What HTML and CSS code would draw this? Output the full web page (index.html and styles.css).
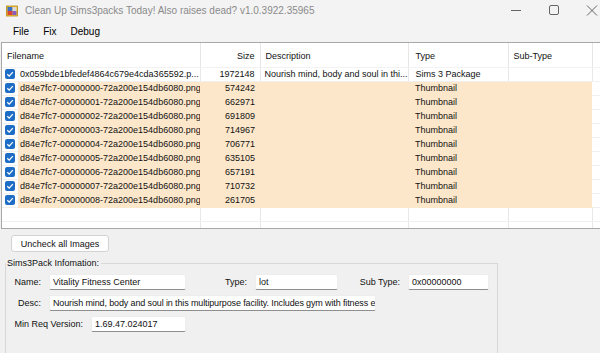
FILE: index.html
```html
<!DOCTYPE html>
<html lang="en">

<head>
    <meta charset="UTF-8">
    <title>Clean Up Sims3packs Today!</title>
    <link rel="stylesheet" href="styles.css">
</head>

<body>
    <div class="titlebar">
        <svg class="app-icon" viewBox="0 0 12 12">
            <rect x="0.5" y="1" width="11" height="10" fill="#f2c230" stroke="#b78a10" stroke-width="0.8" />
            <rect x="1.5" y="2" width="5" height="4" fill="#3a6fc9" />
            <rect x="6.5" y="2" width="4" height="4" fill="#d9d9d9" />
            <rect x="1.5" y="6" width="5" height="4" fill="#d8443a" />
            <rect x="6.5" y="6" width="4" height="4" fill="#8a5cc2" />
        </svg>
        <span class="title">Clean Up Sims3packs Today! Also raises dead? v1.0.3922.35965</span>
        <div class="controls">
            <svg viewBox="0 0 38 21"><path d="M14 10.5h10" stroke="#666" stroke-width="1" /></svg>
            <svg viewBox="0 0 38 21"><rect x="14.5" y="5.5" width="9" height="9" rx="1.5" fill="none" stroke="#666" stroke-width="1" /></svg>
            <svg viewBox="0 0 38 21"><path d="M14 5.5l10 10M24 5.5l-10 10" stroke="#666" stroke-width="1" /></svg>
        </div>
    </div>

    <div class="menubar">
        <span>File</span>
        <span>Fix</span>
        <span>Debug</span>
    </div>

    <div class="list">
        <table>
            <colgroup>
                <col class="c-check">
                <col class="c-name">
                <col class="c-size">
                <col class="c-desc">
                <col class="c-type">
                <col class="c-sub">
                <col class="c-fill">
            </colgroup>
            <thead>
                <tr>
                    <th colspan="2" class="h-name">Filename</th>
                    <th class="num">Size</th>
                    <th class="h-desc">Description</th>
                    <th class="h-type">Type</th>
                    <th class="h-sub">Sub-Type</th>
                    <th class="fill"></th>
                </tr>
            </thead>
            <tbody id="rows">
                <tr class="plain">
                    <td class="check"><svg viewBox="0 0 10 10"><rect width="10" height="10" rx="2" fill="#1d6cc6" /><path d="M2.3 5.2l1.9 1.9 3.6-4" fill="none" stroke="#fff" stroke-width="1.3" /></svg></td>
                    <td class="name">0x059bde1bfedef4864c679e4cda365592.p...</td>
                    <td class="num">1972148</td>
                    <td class="desc">Nourish mind, body and soul in thi...</td>
                    <td class="type">Sims 3 Package</td>
                    <td class="sub"></td>
                    <td class="fill"></td>
                </tr>
            </tbody>
            <tbody>
                <tr class="empty">
                    <td class="check"></td><td></td><td></td><td></td><td></td><td></td><td class="fill"></td>
                </tr>
                <tr class="empty last">
                    <td class="check"></td><td></td><td></td><td></td><td></td><td></td><td class="fill"></td>
                </tr>
            </tbody>
        </table>
    </div>

    <div class="actions">
        <button>Uncheck all Images</button>
    </div>

    <fieldset class="info">
        <legend>Sims3Pack Infomation:</legend>
        <div class="field-row">
            <label class="l-name">Name:</label>
            <div class="box w-name">Vitality Fitness Center</div>
            <label class="l-type">Type:</label>
            <div class="box w-type">lot</div>
            <label class="l-sub">Sub Type:</label>
            <div class="box w-sub">0x00000000</div>
        </div>
        <div class="field-row">
            <label class="l-name">Desc:</label>
            <div class="box w-desc">Nourish mind, body and soul in this multipurpose facility. Includes gym with fitness e</div>
        </div>
        <div class="field-row">
            <label class="l-ver">Min Req Version:</label>
            <div class="box w-ver">1.69.47.024017</div>
        </div>
    </fieldset>

    <script>
        // thumbnail rows
        var sizes = [574242, 662971, 691809, 714967, 706771, 635105, 657191, 710732, 261705];
        var tbody = document.querySelector('#rows');
        var tick = tbody.querySelector('.check').innerHTML;
        for (var i = 0; i < sizes.length; i++) {
            var tr = document.createElement('tr');
            tr.className = 'thumb';
            tr.innerHTML = '<td class="check">' + tick + '</td>' +
                '<td class="name">d84e7fc7-0000000' + i + '-72a200e154db6080.png</td>' +
                '<td class="num">' + sizes[i] + '</td>' +
                '<td class="desc"></td>' +
                '<td class="type">Thumbnail</td>' +
                '<td class="sub"></td>' +
                '<td class="fill"></td>';
            tbody.appendChild(tr);
        }
    </script>
</body>

</html>
```

FILE: styles.css
```css
* {
    margin: 0;
    padding: 0;
    box-sizing: border-box;
}

body {
    width: 600px;
    height: 353px;
    overflow: hidden;
    background: #f0f0f0;
    font-family: "Liberation Sans", Arial, sans-serif;
    font-size: 9px;
    color: #111;
}

/* title bar */
.titlebar {
    height: 21px;
    display: flex;
    align-items: center;
    background: #f3f3f3;
}

.app-icon {
    width: 12px;
    height: 12px;
    margin: 0 7px 0 6px;
}

.title {
    flex: 1;
    font-size: 10px;
    color: #8a8a8a;
    white-space: nowrap;
}

.controls {
    display: flex;
    margin-right: -11px;
}

.controls svg {
    width: 38px;
    height: 21px;
}

/* menu */
.menubar {
    height: 21px;
    display: flex;
    align-items: center;
    gap: 14px;
    padding-left: 13px;
    font-size: 10px;
    color: #000;
    background: #f3f3f3;
}

/* list view */
.list {
    height: 187px;
    margin-left: 1px;
    border: 1px solid #a8a8a8;
    border-right: 0;
    background: #fff;
    overflow: hidden;
}

.list table {
    border-collapse: collapse;
    table-layout: fixed;
    width: 690px;
}

.c-check { width: 16px; }
.c-name { width: 182px; }
.c-size { width: 60px; }
.c-desc { width: 148px; }
.c-type { width: 100px; }
.c-sub { width: 84px; }
.c-fill { width: 100px; }

.list th {
    height: 24px;
    padding: 3px 5px 0;
    font-weight: normal;
    text-align: left;
    border-right: 1px solid #e6e6e6;
    border-bottom: 1px solid #f2f2f2;
}

.list th.num {
    text-align: right;
}

.list th.h-type {
    padding-left: 7px;
}

.list th.h-sub {
    padding-left: 5px;
}

.list td {
    height: 14px;
    padding: 0;
    line-height: 13px;
    white-space: nowrap;
    overflow: hidden;
    border-bottom: 1px solid #f0f0f0;
}

.list td.check {
    padding-left: 3px;
    border-right: 0;
}

.check svg {
    display: block;
    width: 10px;
    height: 10px;
}

.list td.name {
    padding-left: 2px;
}

.list td.num {
    text-align: right;
    padding-right: 5px;
}

.list td.desc {
    padding-left: 4px;
}

.list td.type {
    padding-left: 7px;
}

.plain td,
.empty td {
    border-right: 1px solid #e8e8e8;
}

.list td.check,
.list td.fill {
    border-right: 0;
}

.thumb td {
    background: #fde7cb;
    border-bottom-color: #fde7cb;
}

.thumb td.check,
.thumb td.fill {
    background: #fff;
    border-bottom-color: #f0f0f0;
}

.empty.last td {
    height: 7px;
    border-bottom: 0;
}

/* button */
.actions {
    padding: 6px 0 0 11px;
}

.actions button {
    width: 98px;
    height: 17px;
    font-family: inherit;
    font-size: 9px;
    color: #111;
    background: #fdfdfd;
    border: 1px solid #d3d3d3;
    border-radius: 3px;
}

/* group box, its bottom edge lies below the window */
.info {
    margin: 6px 0 0 5px;
    width: 493px;
    height: 95px;
    min-width: 0;
    border: 1px solid #d8d8d8;
    border-bottom: 0;
    padding: 5px 0 0;
}

.info legend {
    padding: 0 2px 0 1px;
    line-height: 11px;
}

.field-row {
    display: flex;
    align-items: center;
    height: 16px;
    margin-bottom: 5px;
}

.field-row label {
    text-align: right;
    margin-right: 8px;
}

.l-name { width: 35px; }
.l-type { width: 61px; }
.l-sub { width: 62px; }
.l-ver { width: 77px; }

.box {
    height: 16px;
    padding: 0 3px;
    line-height: 14px;
    white-space: nowrap;
    overflow: hidden;
    background: #fff;
    border: 1px solid #ededed;
    border-bottom-color: #8e8e8e;
    border-radius: 2px;
}

.w-name { width: 137px; }
.w-type { width: 83px; }
.w-sub { width: 81px; }
.w-desc {
    width: 327px;
    letter-spacing: -0.13px;
}
.w-ver { width: 95px; }
```
